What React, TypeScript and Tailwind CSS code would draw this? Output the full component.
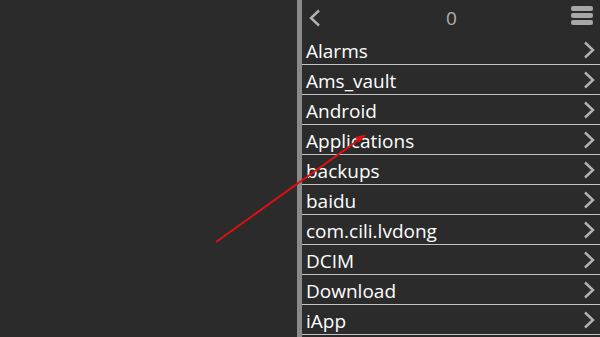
import React from "react";

const folders = [
  "Alarms",
  "Ams_vault",
  "Android",
  "Applications",
  "backups",
  "baidu",
  "com.cili.lvdong",
  "DCIM",
  "Download",
  "iApp",
];

const Chevron = ({ left = false }: { left?: boolean }) => (
  <svg width="14" height="18" viewBox="0 0 14 18" fill="none">
    <path
      d={left ? "M11 1.5 L3 9 L11 16.5" : "M3 1.5 L11 9 L3 16.5"}
      stroke="#b3b3b3"
      strokeWidth="2.4"
    />
  </svg>
);

export default function App() {
  return (
    <div
      className="relative w-[600px] h-[337px] overflow-hidden bg-[#2b2b2b] flex"
      style={{ fontFamily: '"Open Sans", "DejaVu Sans", sans-serif' }}
    >
      {/* empty left pane */}
      <div className="w-[297px] shrink-0" />

      {/* divider */}
      <div className="w-[5px] shrink-0 bg-[#8a8a8a]" />

      {/* folder list */}
      <div className="flex-1 flex flex-col">
        <div className="h-[35px] flex items-center justify-between pl-[6px] pr-[7px]">
          <Chevron left />
          <span className="text-[19px] text-[#b0b0b0] leading-none mt-[1px] ml-[10px]">0</span>
          <div className="flex flex-col gap-[2px] mb-[5px]">
            <div className="w-[22px] h-[5px] rounded-[2px] bg-[#a8a8a8]" />
            <div className="w-[22px] h-[5px] rounded-[2px] bg-[#a8a8a8]" />
            <div className="w-[22px] h-[5px] rounded-[2px] bg-[#a8a8a8]" />
          </div>
        </div>
        {folders.map((name) => (
          <div
            key={name}
            className="h-[30px] flex items-center justify-between border-b border-[#c4c4c4] pl-[4px] pr-[4px]"
          >
            <span className="text-[19px] text-white leading-none mt-[3px]">{name}</span>
            <span className="mt-[1px]">
              <Chevron />
            </span>
          </div>
        ))}
      </div>

      {/* red annotation arrow */}
      <svg className="absolute left-0 top-0" width="600" height="337" viewBox="0 0 600 337">
        <line x1="216" y1="242" x2="362" y2="137.5" stroke="#e01010" strokeWidth="2" />
        <polygon points="366.5,134.5 355,137 359,142.5" fill="#e01010" />
      </svg>
    </div>
  );
}
